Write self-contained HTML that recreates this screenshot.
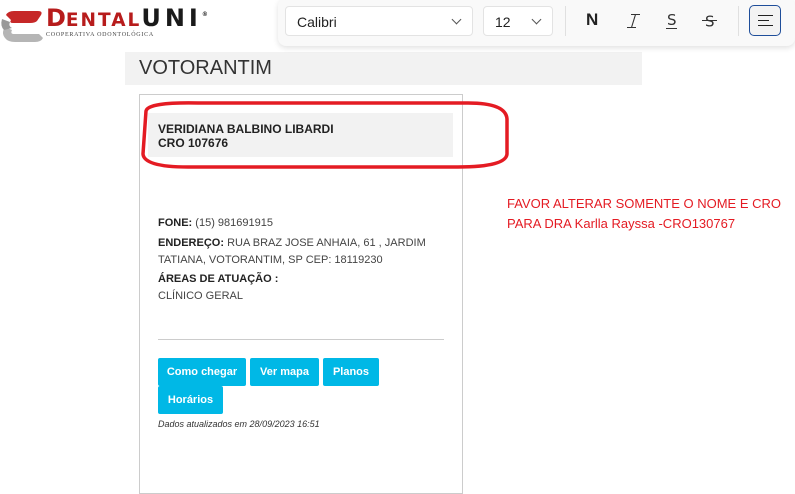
<!DOCTYPE html>
<html><head><meta charset="utf-8"><style>
*{margin:0;padding:0;box-sizing:border-box}
body{width:795px;height:477px;background:#fff;font-family:"Liberation Sans",sans-serif;position:relative;overflow:hidden;color:#333}
.abs{position:absolute}
.tb{left:278px;top:-2px;width:517px;height:48px;background:#f9f9f9;border-radius:8px;box-shadow:0 2px 6px rgba(0,0,0,.12)}
.dd{position:absolute;top:8px;height:30px;background:#fff;border:1px solid #e3e3e3;border-radius:4px;font-size:14px;color:#222;padding:7px 0 0 11px}
.chev{position:absolute;right:12px;top:9px;width:7px;height:7px;border-right:1.3px solid #555;border-bottom:1.3px solid #555;transform:rotate(45deg)}
.sep{position:absolute;top:8px;width:1px;height:30px;background:#e0e0e0}
.card{left:139px;top:94px;width:324px;height:400px;border:1px solid #ccc}
.t{font-size:11px;color:#444;line-height:17px}
.b{font-weight:bold;color:#222}
.bt{position:absolute;height:28px;background:#00b8e6;color:#fff;font-weight:bold;font-size:11px;border-radius:2px;text-align:center;line-height:28px}
</style></head><body>
<svg class="abs" style="left:0;top:9px" width="44" height="35" viewBox="0 0 44 35">
<path d="M6 6 Q8 2 14 2 L38 2 Q43 2 41 6 L37 12 Q35 14 30 14 L13 14 Q9 14 11 11 Z" fill="#c62828"/>
<path d="M5 18 Q1 24 5 29 Q8 33 15 33 L35 33 Q41 33 43 29 L39 25 L14 25 Q10 25 12 21 Z" fill="#b5b5b5"/>
<path d="M2 10 Q0 17 4 21 L12 19 Q8 17 10 13 Z" fill="#999"/>
</svg>
<div class="abs" style="left:46px;top:6px;font-weight:bold;line-height:25px;white-space:nowrap;font-family:'DejaVu Sans',sans-serif"><span style="color:#b71c1c;font-size:24px">D</span><span style="color:#b71c1c;font-size:18.5px;letter-spacing:2px">ENTAL</span><span style="color:#1a1a1a;font-size:24px;letter-spacing:4px">UNI</span><span style="font-size:6px;vertical-align:top;color:#333;position:relative;top:-4px">®</span></div>
<div class="abs" style="left:46px;top:32px;font-size:6px;color:#444;letter-spacing:.75px;white-space:nowrap;font-family:'Liberation Serif',serif">COOPERATIVA ODONTOLÓGICA</div>

<div class="abs" style="left:125px;top:52px;width:517px;height:33px;background:#f2f2f2"></div>
<div class="abs tb">
 <div class="dd" style="left:7px;width:188px">Calibri<span class="chev"></span></div>
 <div class="dd" style="left:205px;width:70px">12<span class="chev"></span></div>
 <div class="sep" style="left:287px"></div>
 <div style="position:absolute;left:308px;top:12px;font-size:17px;font-weight:bold;color:#222">N</div>
 <svg style="position:absolute;left:340px;top:14px" width="150" height="22">
  <path d="M13 2.5H22M17.5 2.5L13.5 15.5M9 15.5H18" stroke="#333" stroke-width="1.1" fill="none"/>
  <text x="49" y="13" font-size="15" font-family="DejaVu Sans" fill="#333">S</text>
  <line x1="48" y1="16.5" x2="59" y2="16.5" stroke="#333" stroke-width="1"/>
  <text x="87" y="14.5" font-size="15" font-family="DejaVu Sans" fill="#333">S</text>
  <line x1="84" y1="8.5" x2="99" y2="8.5" stroke="#333" stroke-width="1"/>
 </svg>
 <div class="sep" style="left:460px"></div>
 <div style="position:absolute;left:471px;top:7px;width:32px;height:31px;border:1.5px solid #1f4e9a;border-radius:5px;background:#f3f3f3">
  <div style="position:absolute;left:8px;top:9px;width:15px;height:1.3px;background:#222"></div>
  <div style="position:absolute;left:8px;top:14px;width:11px;height:1.3px;background:#222"></div>
  <div style="position:absolute;left:8px;top:19px;width:15px;height:1.3px;background:#222"></div>
 </div>
</div>
<div class="abs" style="left:139px;top:57px;font-size:20px;color:#333">VOTORANTIM</div>

<div class="abs card"></div>
<div class="abs" style="left:148px;top:113px;width:305px;height:44px;background:#f2f2f2"></div>
<div class="abs b" style="left:158px;top:122px;font-size:12px;line-height:14px">VERIDIANA BALBINO LIBARDI<br>CRO 107676</div>
<svg class="abs" style="left:138px;top:99px" width="375" height="72"><path d="M8 12 Q10 3 60 4 L330 4 Q368 4 369 20 L369 55 Q368 68 320 68 L50 68 Q6 68 5 55 Z" fill="none" stroke="#e41b23" stroke-width="3.5"/></svg>

<div class="abs t" style="left:158px;top:215px"><span class="b">FONE:</span> (15) 981691915</div>
<div class="abs t" style="left:158px;top:235px;width:290px"><span class="b">ENDEREÇO:</span> RUA BRAZ JOSE ANHAIA, 61 , JARDIM TATIANA, VOTORANTIM, SP CEP: 18119230</div>
<div class="abs t" style="left:158px;top:271px"><span class="b">ÁREAS DE ATUAÇÃO :</span><br>CLÍNICO GERAL</div>
<div class="abs" style="left:158px;top:339px;width:286px;height:1px;background:#ccc"></div>
<div class="bt" style="left:158px;top:358px;width:88px">Como chegar</div>
<div class="bt" style="left:250px;top:358px;width:69px">Ver mapa</div>
<div class="bt" style="left:323px;top:358px;width:56px">Planos</div>
<div class="bt" style="left:158px;top:386px;width:65px">Horários</div>
<div class="abs" style="left:158px;top:419px;font-size:9px;font-style:italic;color:#333">Dados atualizados em 28/09/2023 16:51</div>

<div class="abs" style="left:507px;top:194px;font-size:13px;line-height:20px;color:#e41b23">FAVOR ALTERAR SOMENTE O NOME E CRO<br>PARA DRA Karlla Rayssa -CRO130767</div>
</body></html>
